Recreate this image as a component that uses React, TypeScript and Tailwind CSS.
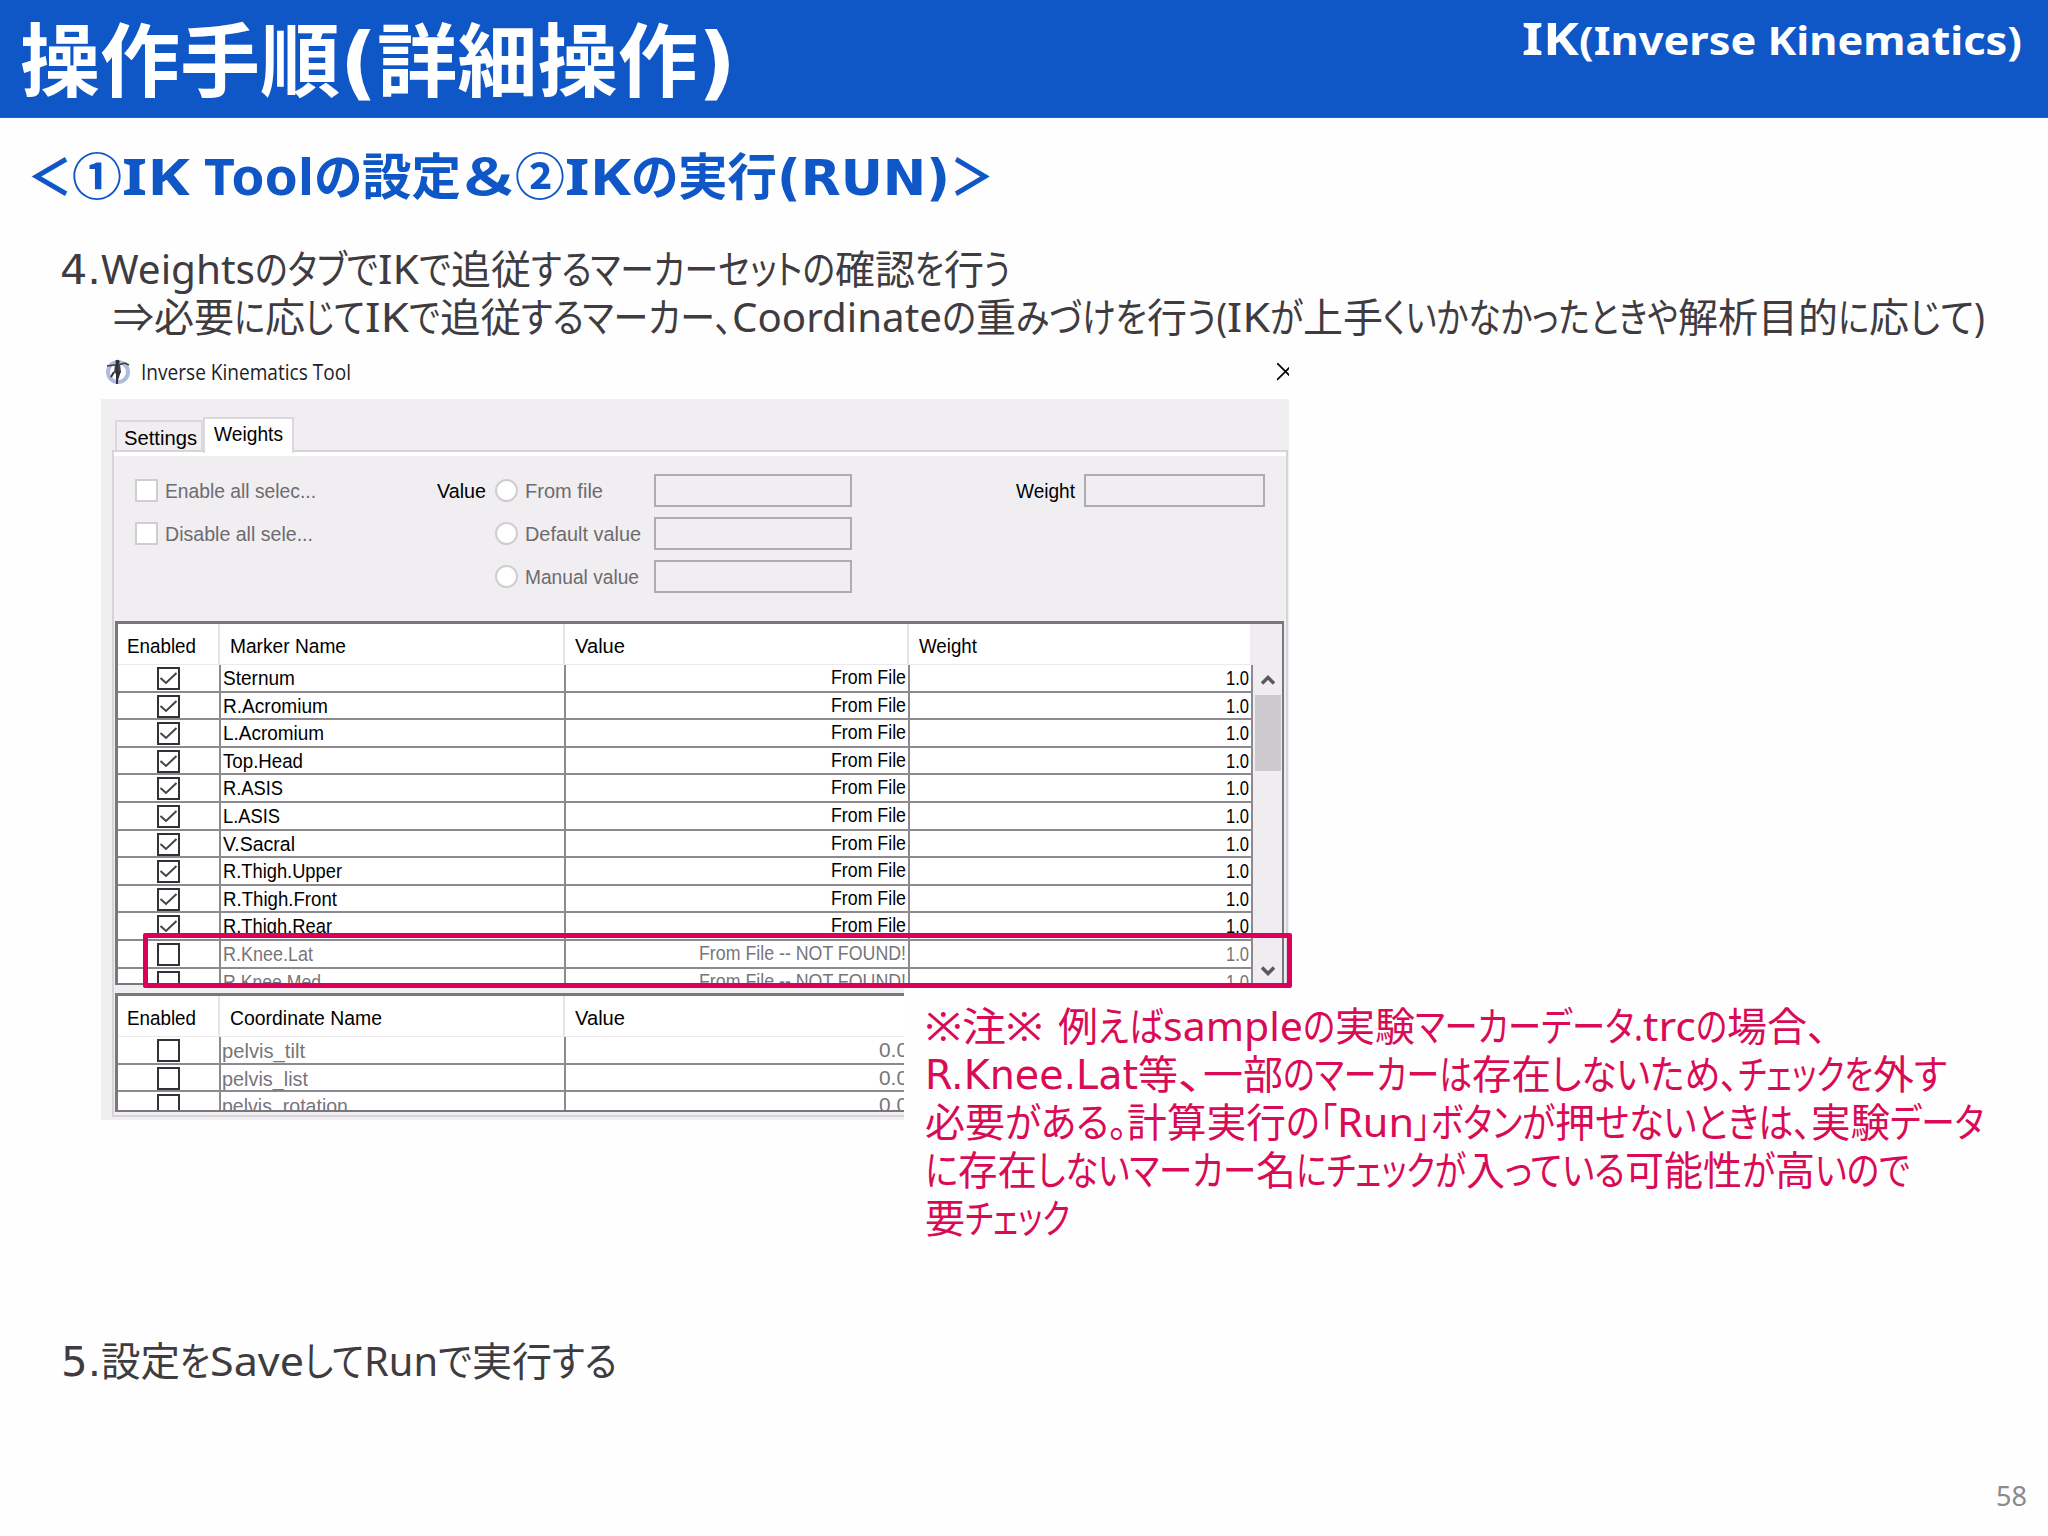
import { useLayoutEffect, useRef, useState, type ReactNode } from 'react';

// text run, the x position where it ends, and whether it takes the wider Latin face
type Run = [string, number, boolean?];

interface MarkerRow {
  name: string;
  nameWidth: number;
  enabled: boolean;
}

const TITLE: Run[] = [['操作手順', 340], ['(', 377, true], ['詳細操作', 698], [')', 736, true]];

const SUBTITLE: Run[] = [
  ['＜', 72], ['①', 122], ['IK', 190], [' ', 204], ['Tool', 314], ['の', 362], ['設定', 461], ['＆', 515],
  ['②', 565], ['IK', 631], ['の', 678], ['実行', 777], ['(RUN)', 950, true], ['＞', 994],
];

const STEP4: Run[] = [
  ['4.', 101, true], ['Weights', 255], ['のタブで', 378], ['IK', 419], ['で', 451], ['追従', 531],
  ['するマーカーセットの', 835], ['確認', 915], ['を', 944], ['行', 984], ['う', 1010],
];

const STEP4_SUB: Run[] = [
  ['⇒', 154], ['必要', 234], ['に', 265], ['応', 305], ['じて', 365], ['IK', 409], ['で', 440], ['追従', 521],
  ['するマーカー、', 732], ['Coordinate', 942], ['の', 976], ['重', 1016], ['みづけを', 1147], ['行', 1187],
  ['う(', 1227], ['IK', 1270], ['が', 1303], ['上手', 1383], ['くいかなかったときや', 1678], ['解析目的', 1838],
  ['に', 1869], ['応', 1909], ['じて)', 1985],
];

const NOTE: Run[][] = [
  [
    ['※注※', 1043], [' ', 1058], ['例', 1098], ['えば', 1163], ['sample', 1303], ['の', 1335], ['実験', 1415],
    ['マーカーデータ.', 1643], ['trc', 1696], ['の', 1727], ['場合', 1807], ['、', 1827],
  ],
  [
    ['R.Knee.Lat', 1138, true], ['等', 1178], ['、', 1203], ['一部', 1283], ['のマーカーは', 1472], ['存在', 1551],
    ['しないため、', 1738], ['チェックを', 1873], ['外', 1914], ['す', 1947],
  ],
  [
    ['必要', 1005], ['がある。', 1127], ['計算実行', 1286], ['の「', 1337], ['Run', 1414], ['」ボタンが', 1555],
    ['押', 1595], ['せないときは、', 1811], ['実験', 1890], ['データ', 1984],
  ],
  [
    ['に', 958], ['存在', 1037], ['しないマーカー', 1256], ['名', 1296], ['にチェックが', 1466], ['入', 1505],
    ['っている', 1625], ['可能性', 1742], ['が', 1775], ['高', 1815], ['いので', 1910],
  ],
  [['要', 965], ['チェック', 1070]],
];

const STEP5: Run[] = [
  ['5.', 101, true], ['設定', 180], ['を', 210], ['Save', 304], ['して', 364], ['Run', 438], ['で', 472],
  ['実行', 552], ['する', 617],
];

const MARKERS: MarkerRow[] = [
  { name: 'Sternum', nameWidth: 72, enabled: true },
  { name: 'R.Acromium', nameWidth: 105, enabled: true },
  { name: 'L.Acromium', nameWidth: 101, enabled: true },
  { name: 'Top.Head', nameWidth: 80, enabled: true },
  { name: 'R.ASIS', nameWidth: 60, enabled: true },
  { name: 'L.ASIS', nameWidth: 57, enabled: true },
  { name: 'V.Sacral', nameWidth: 72, enabled: true },
  { name: 'R.Thigh.Upper', nameWidth: 119, enabled: true },
  { name: 'R.Thigh.Front', nameWidth: 114, enabled: true },
  { name: 'R.Thigh.Rear', nameWidth: 109, enabled: true },
  { name: 'R.Knee.Lat', nameWidth: 90, enabled: false },
  { name: 'R.Knee.Med', nameWidth: 98, enabled: false },
];

const COORDINATES: MarkerRow[] = [
  { name: 'pelvis_tilt', nameWidth: 83, enabled: false },
  { name: 'pelvis_list', nameWidth: 86, enabled: false },
  { name: 'pelvis_rotation', nameWidth: 126, enabled: false },
];

// Condenses or widens its text so that it takes exactly `width` pixels
function Fit({ width, children }: { width: number; children: ReactNode }) {
  const ref = useRef<HTMLSpanElement>(null);
  const [scale, setScale] = useState(1);

  useLayoutEffect(() => {
    const w = ref.current?.getBoundingClientRect().width || 0;
    if (w > 0) setScale(s => (width / w) * s);
  }, [width, children]);

  return (
    <span className="inline-block shrink-0 whitespace-pre" style={{ width }}>
      <span ref={ref} className="inline-block origin-left" style={{ transform: `scaleX(${scale})` }}>
        {children}
      </span>
    </span>
  );
}

function Line({ start, runs, className }: { start: number; runs: Run[]; className?: string }) {
  return (
    <div className={`flex shrink-0 items-baseline whitespace-nowrap ${className || ''}`}>
      {runs.map(([text, end, wide], i) => (
        <span key={i} className={wide ? "font-['DejaVu_Sans',sans-serif] leading-none" : ''}>
          <Fit width={end - (i === 0 ? start : runs[i - 1][1])}>{text}</Fit>
        </span>
      ))}
    </div>
  );
}

function CheckBox({ checked }: { checked: boolean }) {
  return (
    <span className="flex h-[23px] w-[23px] items-center justify-center border-2 border-[#333135] bg-white">
      {checked && (
        <svg viewBox="0 0 19 19" className="h-[19px] w-[19px]" fill="none" stroke="#454347" strokeWidth="2">
          <path d="M1.500 9 L7 14 L17.500 4" />
        </svg>
      )}
    </span>
  );
}

function HeaderCells({ name, nameWidth, withWeight }: { name: string; nameWidth: number; withWeight?: boolean }) {
  return (
    <div className="flex h-[41px] shrink-0 border-b border-[#ebe9ec] bg-[#efedf0] leading-[43px] text-black">
      <div className="w-[102px] border-r-2 border-[#e6e4e7] bg-white pl-[9px]"><Fit width={69}>Enabled</Fit></div>
      <div className="w-[345px] border-r-2 border-[#e6e4e7] bg-white pl-[10px]"><Fit width={nameWidth}>{name}</Fit></div>
      <div className={`border-[#e6e4e7] bg-white pl-[10px] ${withWeight ? 'w-[344px] border-r-2' : 'flex-1'}`}>
        <Fit width={50}>Value</Fit>
      </div>
      {withWeight && <div className="w-[341px] bg-white pl-[10px]"><Fit width={58}>Weight</Fit></div>}
    </div>
  );
}

function Settings() {
  const radios = [
    { label: 'From file', width: 78 },
    { label: 'Default value', width: 116 },
    { label: 'Manual value', width: 114 },
  ];
  return (
    <div className="flex h-[165px] pl-[21px] pt-[18px] leading-[33px] text-[#6d6b6f]">
      <div className="flex w-[302px] flex-col gap-[10px]">
        <div className="flex h-[33px] items-center gap-[7px]">
          <span className="h-[23px] w-[23px] border-2 border-[#cfcdd0] bg-white" />
          <Fit width={151}>Enable all selec...</Fit>
        </div>
        <div className="flex h-[33px] items-center gap-[7px]">
          <span className="h-[23px] w-[23px] border-2 border-[#cfcdd0] bg-white" />
          <Fit width={148}>Disable all sele...</Fit>
        </div>
      </div>
      <div className="w-[58px] text-black"><Fit width={49}>Value</Fit></div>
      <div className="flex flex-col gap-[10px]">
        {radios.map(r => (
          <div key={r.label} className="flex h-[33px] items-center">
            <span className="h-[23px] w-[23px] rounded-full border-2 border-[#cfcdd0] bg-white" />
            <span className="w-[136px] pl-[7px]"><Fit width={r.width}>{r.label}</Fit></span>
            <span className="h-[33px] w-[198px] border-2 border-[#aeacaf]" />
          </div>
        ))}
      </div>
      <div className="ml-[164px] w-[68px] text-black"><Fit width={59}>Weight</Fit></div>
      <span className="h-[33px] w-[181px] border-2 border-[#aeacaf]" />
    </div>
  );
}

function MarkerTable() {
  return (
    <div className="flex h-[364px] w-[1169px] border-[3px] border-r-2 border-b-2 border-[#79777b] bg-[#efedf0]">
      <div className="flex w-[1135px] flex-col overflow-hidden bg-white">
        <HeaderCells name="Marker Name" nameWidth={116} withWeight />
        {MARKERS.map(m => (
          <div key={m.name} className={`flex h-[27.6px] shrink-0 leading-[26px] ${m.enabled ? 'text-black' : 'text-[#77757a]'}`}>
            <div className="flex w-[103px] justify-center border-r-2 border-b-2 border-[#8c8a8e] pt-[2px]">
              <CheckBox checked={m.enabled} />
            </div>
            <div className="w-[345px] border-r-2 border-b-2 border-[#8c8a8e] pl-[2px]">
              <Fit width={m.nameWidth}>{m.name}</Fit>
            </div>
            <div className="w-[344px] border-r-2 border-b-2 border-[#8c8a8e] pr-[2px] text-right leading-[24px]">
              {m.enabled ? <Fit width={75}>From File</Fit> : <Fit width={207}>From File -- NOT FOUND!</Fit>}
            </div>
            <div className="w-[343px] border-r-2 border-b-2 border-[#8c8a8e] pr-[2px] text-right">
              <Fit width={23}>1.0</Fit>
            </div>
          </div>
        ))}
      </div>
      <div className="flex flex-1 flex-col items-center pt-[50px]">
        <svg viewBox="0 0 14 12" className="h-3 w-[14px]" fill="none" stroke="#5b595d" strokeWidth="3.4">
          <path d="M1 9.5 L7 3.5 L13 9.5" />
        </svg>
        <div className="mt-[9px] h-[76px] w-[26px] bg-[#cccacd]" />
        <svg viewBox="0 0 14 12" className="mt-[194px] h-3 w-[14px]" fill="none" stroke="#5b595d" strokeWidth="3.4">
          <path d="M1 2.5 L7 8.5 L13 2.5" />
        </svg>
      </div>
    </div>
  );
}

function CoordinateTable() {
  return (
    <div className="mt-2 h-[119px] w-[790px] overflow-hidden border-[3px] border-r-0 border-b-2 border-[#79777b] bg-white">
      <div className="flex w-[795px] flex-col">
        <HeaderCells name="Coordinate Name" nameWidth={152} />
        {COORDINATES.map(c => (
          <div key={c.name} className="flex h-[27.6px] shrink-0 leading-[27px] text-[#77757a]">
            <div className="flex w-[103px] justify-center border-r-2 border-b-2 border-[#8c8a8e] pt-[2px]">
              <CheckBox checked={c.enabled} />
            </div>
            <div className="w-[345px] border-r-2 border-b-2 border-[#8c8a8e] pl-px">
              <Fit width={c.nameWidth}>{c.name}</Fit>
            </div>
            <div className="w-[347px] border-b-2 border-[#8c8a8e] pr-[6px] text-right leading-[25px]">
              <Fit width={29}>0.0</Fit>
            </div>
          </div>
        ))}
      </div>
    </div>
  );
}

function ToolWindow() {
  return (
    <div className="ml-[101px] w-[1188px] font-['Liberation_Sans',Arial,sans-serif] text-[20.5px]">
      <div className="flex h-[54px] items-center overflow-hidden pb-px pl-[5px]">
        <svg viewBox="0 0 24 26" className="h-[26px] w-6">
          <circle cx="12" cy="13" r="10" fill="#fdfdff" stroke="#aebcdc" strokeWidth="4" />
          <path d="M1 7 L8 6 L12 6 L19 4 L23 6" fill="none" stroke="#3d3d44" strokeWidth="1.6" />
          <path d="M9 5 L14 5 L15 13 L12 17 L8 13 Z" fill="#45454b" />
          <path d="M11 1 V25 M8 13 L5 18 M14 12 L11 21" fill="none" stroke="#2f2f35" strokeWidth="2" />
          <circle cx="11.500" cy="3" r="2.200" fill="#2f2f35" />
        </svg>
        <span className="ml-[11px] font-['Open_Sans','Noto_Sans',sans-serif] text-[21px] text-[#1d1d28]">
          <Fit width={210}>Inverse Kinematics Tool</Fit>
        </span>
        {/* the close button is cut off by the window edge */}
        <svg viewBox="0 0 12 18" className="ml-auto h-[18px] w-3" fill="none" stroke="#000" strokeWidth="1.7">
          <path d="M0 0 L17 17 M0 17 L17 0" />
        </svg>
      </div>
      <div className="h-[721px] bg-[#f0eef1] pl-[11px] pt-[18px]">
        <div className="relative z-10 flex items-end text-black">
          <div className="ml-[3px] h-[30px] w-[88px] border-2 border-b-0 border-[#dad8db] pl-[7px] leading-[31px]">
            <Fit width={73}>Settings</Fit>
          </div>
          <div className="-mb-[3px] h-[36px] w-[91px] border-2 border-b-0 border-[#dad8db] bg-white pl-[9px] leading-[30px]">
            <Fit width={69}>Weights</Fit>
          </div>
        </div>
        <div className="h-[667px] w-[1176px] border-2 border-[#d6d4d7]">
          <div className="h-[4px] bg-white" />
          <Settings />
          <div className="pl-px">
            <MarkerTable />
            <CoordinateTable />
          </div>
        </div>
      </div>
    </div>
  );
}

export default function App() {
  return (
    <div className="relative flex h-[1536px] w-[2048px] flex-col overflow-hidden bg-[#fefefe] font-['Noto_Sans','Noto_Sans_CJK_JP',sans-serif] text-[40px] leading-[48px] text-[#3e3c40] [font-feature-settings:'palt']">
      <header className="flex h-[118px] shrink-0 justify-between border-b border-[#2a63bd] bg-[#0f57c6] pl-[20px] pr-[26px] font-bold text-white">
        <Line start={20} runs={TITLE} className="text-[80px] leading-[118px]" />
        <div className="flex items-baseline pt-[14px]">
          <span className="text-[45px]"><Fit width={57}>IK</Fit></span>
          <Fit width={443}>(Inverse Kinematics)</Fit>
        </div>
      </header>

      <Line start={27} runs={SUBTITLE} className="mt-[28px] h-[60px] pl-[27px] text-[50px] font-bold leading-[60px] text-[#0f57c6]" />

      <div className="mt-[39px] h-[100px]">
        <Line start={60} runs={STEP4} className="h-12 pl-[60px]" />
        <Line start={113} runs={STEP4_SUB} className="h-12 pl-[113px]" />
      </div>

      <ToolWindow />

      {/* highlight over the markers that are missing in the trc file */}
      <div className="absolute left-[143px] top-[933px] h-[55px] w-[1149px] rounded-[2px] border-[5px] border-[#dc0058]" />

      <div className="absolute left-[904px] top-[988px] h-[262px] w-[1120px] bg-[#fefefe] pl-[21px] pt-[14px] text-[#d90b56]">
        {NOTE.map((runs, i) => (
          <Line key={i} start={925} runs={runs} className="h-12" />
        ))}
      </div>

      <Line start={61} runs={STEP5} className="mt-[217px] h-12 pl-[61px]" />

      <footer className="mt-auto pb-5 pr-[21px] text-right text-[27px] leading-[40px] text-[#8b898c]">
        <Fit width={31}>58</Fit>
      </footer>
    </div>
  );
}
